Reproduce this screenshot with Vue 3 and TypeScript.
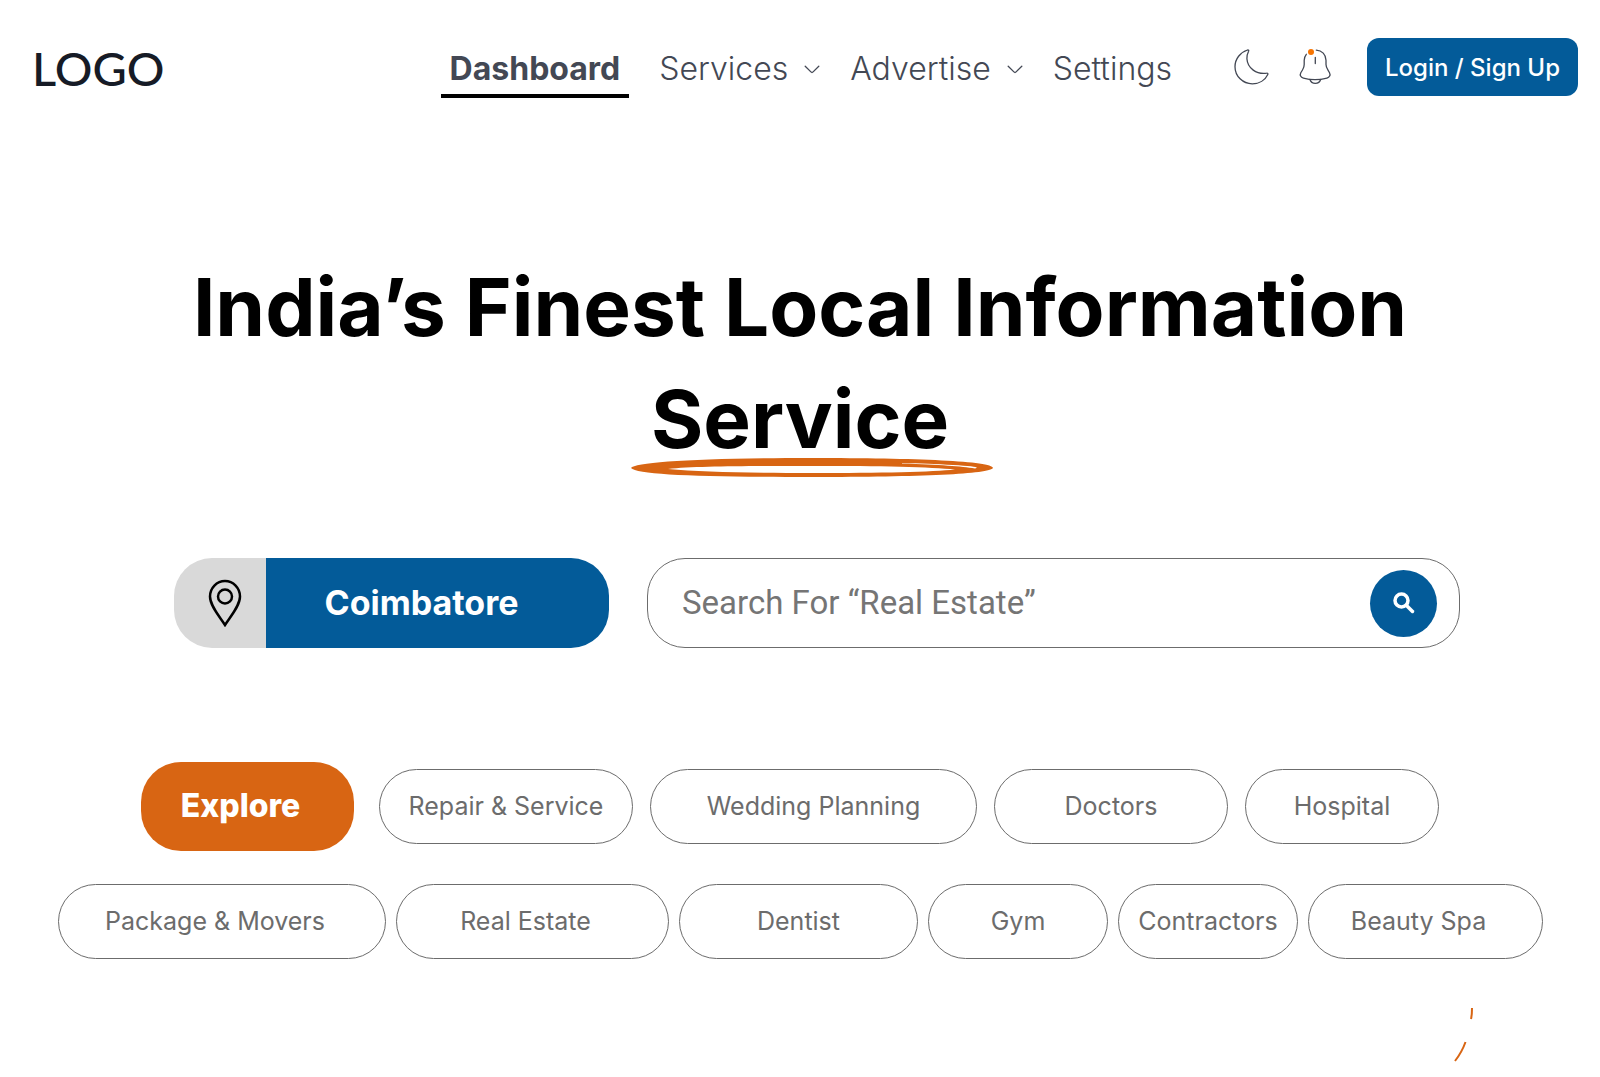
<script setup lang="ts">
import { ref } from 'vue'

interface NavItem {
  label: string
  active?: boolean
  menu?: boolean
}

interface Category {
  label: string
  tone?: string
}

const navItems: NavItem[] = [
  { label: 'Dashboard', active: true },
  { label: 'Services', menu: true },
  { label: 'Advertise', menu: true },
  { label: 'Settings' },
]

const featured: Category[] = [
  { label: 'Explore', tone: 'primary' },
  { label: 'Repair & Service' },
  { label: 'Wedding Planning' },
  { label: 'Doctors' },
  { label: 'Hospital' },
]

const more: Category[] = [
  { label: 'Package & Movers', tone: 'lean' },
  { label: 'Real Estate', tone: 'lean' },
  { label: 'Dentist' },
  { label: 'Gym' },
  { label: 'Contractors' },
  { label: 'Beauty Spa', tone: 'lean' },
]

const query = ref('')
</script>

<template>
  <div class="page">
    <header class="header">
      <a class="logo" href="#">LOGO</a>
      <nav class="nav" aria-label="Main">
        <a
          v-for="item in navItems"
          :key="item.label"
          href="#"
          class="nav-link"
          :class="{ active: item.active }"
        >
          {{ item.label }}
          <svg v-if="item.menu" class="chevron" viewBox="0 0 16 9" aria-hidden="true">
            <path d="M1.2 1.2 6.9 6.9Q8 8 9.1 6.9L14.8 1.2" />
          </svg>
        </a>
      </nav>
      <div class="tools">
        <button class="icon-button" type="button" aria-label="Dark mode">
          <svg viewBox="0 0 36 36" aria-hidden="true">
            <path
              d="M13.6 1C6.4 3.2 1 9.900 1 17.700 1 27.200 8.800 34.800 18.300 34.800 25.200 34.800 31.200 31 33.800 25.400 34.200 24.500 33.600 24 32.700 24.200 22.500 25.600 13.600 19.400 12.900 9.700 12.700 7 13.300 4.800 14.600 2.300 15 1.400 14.500.8 13.600 1Z"
            />
          </svg>
        </button>
        <button class="icon-button" type="button" aria-label="Notifications">
          <svg viewBox="0 0 36 36" aria-hidden="true">
            <path
              d="M18.300 1.100C24 1.300 27.900 5.600 28 11.200V15.600C28 17.800 28.800 19.300 30 21.200L31.500 23.700C32.800 26.200 31.500 28.400 28.900 29.100 21.600 31 12.400 31 5.400 29.100 2.700 28.400 1.500 26.200 2.800 23.700L4.500 21C5.700 19.200 6.200 17.800 6.200 15.600V11.200C6.300 8.700 7 6.900 8.300 5.300"
            />
            <path d="M17.300 8.300V14.500M11.800 30.300C12.600 32.800 14.400 34.400 17.300 34.400S22 32.800 22.800 30.300" />
            <circle class="dot" cx="13" cy="3" r="3" />
          </svg>
        </button>
      </div>
      <button class="login" type="button">Login / Sign Up</button>
    </header>

    <main>
      <h1 class="title">
        India’s Finest Local Information
        <span class="marked">
          Service
          <svg class="scribble" viewBox="0 0 362 20" aria-hidden="true">
            <path
              fill-rule="evenodd"
              d="M0 10C4 4 70 0 181 0 285 0 362 3 362 10 359 16 290 19 181 19 72 19 6 17 0 10ZM37 11C70 14 120 15 181 15 250 15 302 14 324 11.500 300 9 250 8 181 8 120 8 65 8 37 11ZM271 5.500C310 7 330 8 344 10.500 350 9.500 342 8 322 7 305 6 290 5.500 271 5Z"
            />
          </svg>
        </span>
      </h1>

      <form class="finder" role="search" @submit.prevent>
        <button class="location" type="button">
          <span class="pin">
            <svg viewBox="0 0 34 48" aria-hidden="true">
              <path d="M17 46C12 38 2 27 2 17.500A15 15.500 0 0 1 32 17.500C32 27 22 38 17 46Z" />
              <circle cx="17" cy="17.500" r="7" />
            </svg>
          </span>
          <span class="city">Coimbatore</span>
        </button>
        <div class="search">
          <input
            v-model="query"
            type="text"
            aria-label="Search"
            placeholder="Search For “Real Estate”"
          />
          <button class="submit" type="submit" aria-label="Search">
            <svg viewBox="0 0 22 22" aria-hidden="true">
              <circle cx="8.500" cy="8.500" r="6.500" />
              <path d="M13.500 13.500 19.500 19.500" />
            </svg>
          </button>
        </div>
      </form>

      <div class="chips featured">
        <button v-for="c in featured" :key="c.label" type="button" class="chip" :class="c.tone">
          {{ c.label }}
        </button>
      </div>
      <div class="chips more">
        <button v-for="c in more" :key="c.label" type="button" class="chip" :class="c.tone">
          {{ c.label }}
        </button>
      </div>
    </main>

    <svg class="arc" viewBox="0 0 20 56" aria-hidden="true">
      <path d="M18 1Q18 8 17 12M11.500 35Q8 45 1 54" />
    </svg>
  </div>
</template>

<style>
body {
  background: #fff;
}
</style>

<style scoped>
.page {
  font-family: Inter, 'Noto Sans', sans-serif;
  color: #000;
  overflow: hidden;
}

button {
  font-family: inherit;
  border: 0;
  padding: 0;
  cursor: pointer;
}

a {
  color: inherit;
  text-decoration: none;
}

.header {
  display: flex;
  align-items: center;
  padding: 38px 22px 0 32px;
  height: 58px;
}

.logo {
  font-family: Lato, sans-serif;
  font-size: 47px;
  font-weight: 500;
  line-height: 58px;
  color: #161b26;
  margin-right: auto;
  padding-top: 2px;
}

.nav {
  display: flex;
  gap: 30px;
}

.nav-link {
  display: flex;
  align-items: center;
  gap: 16px;
  font-size: 32px;
  line-height: 50px;
  font-weight: 300;
  color: #434854;
  padding-top: 8px;
  border-bottom: 4px solid transparent;
}

.nav-link.active {
  font-weight: 700;
  padding: 8px 9px 0;
  border-bottom-color: #000;
}

.chevron {
  width: 16px;
  height: 9px;
  fill: none;
  stroke: #434854;
  stroke-width: 1.3;
  stroke-linecap: round;
}

.tools {
  display: flex;
  gap: 28px;
  margin: 0 33px 0 62px;
}

.icon-button {
  width: 36px;
  height: 36px;
  background: none;
}

.icon-button svg {
  display: block;
  width: 36px;
  height: 36px;
  fill: none;
  stroke: #434854;
  stroke-width: 1.3;
  stroke-linecap: round;
}

.icon-button .dot {
  fill: #f77400;
  stroke: none;
}

.login {
  width: 211px;
  height: 58px;
  border-radius: 12px;
  background: #035b99;
  color: #fff;
  font-size: 24px;
  font-weight: 500;
}

.title {
  margin: 155px auto 0;
  font-size: 80px;
  line-height: 112px;
  font-weight: 700;
  text-align: center;
}

.marked {
  position: relative;
  display: table;
  margin: 0 auto;
}

.scribble {
  position: absolute;
  left: 50%;
  bottom: -3px;
  width: 362px;
  height: 20px;
  margin-left: -169px;
  fill: #d86513;
}

.finder {
  display: grid;
  grid-template-columns: 435fr 813fr;
  gap: 38px;
  padding: 0 140px 0 174px;
  margin-top: 83px;
}

.location {
  display: flex;
  height: 90px;
  background: none;
}

.pin {
  display: flex;
  align-items: center;
  justify-content: center;
  width: 92px;
  height: 90px;
  padding-left: 10px;
  box-sizing: border-box;
  border-radius: 38px 0 0 38px;
  background: #d9d9d9;
}

.pin svg {
  width: 34px;
  height: 48px;
  fill: none;
  stroke: #000;
  stroke-width: 2.500;
}

.city {
  flex: 1;
  padding-right: 32px;
  border-radius: 0 38px 38px 0;
  background: #035b99;
  color: #fff;
  font-size: 34px;
  line-height: 90px;
  font-weight: 700;
}

.search {
  display: flex;
  align-items: center;
  box-sizing: border-box;
  min-width: 0;
  height: 90px;
  padding: 0 22px 0 34px;
  border: 1px solid #6c6c6c;
  border-radius: 38px;
}

.search input {
  flex: 1;
  min-width: 0;
  height: 60px;
  padding: 0 0 2px;
  box-sizing: border-box;
  border: 0;
  outline: 0;
  background: none;
  color: #6c6c6c;
  font-family: Roboto, sans-serif;
  font-size: 33px;
}

.search input::placeholder {
  color: #757575;
  opacity: 1;
}

.submit {
  display: flex;
  align-items: center;
  justify-content: center;
  width: 67px;
  height: 67px;
  border-radius: 50%;
  background: #035b99;
}

.submit svg {
  width: 22px;
  height: 22px;
  fill: none;
  stroke: #fff;
  stroke-width: 3.500;
  stroke-linecap: round;
}

.chips {
  display: grid;
  align-items: center;
}

.featured {
  grid-template-columns: 221fr 254fr 327fr 234fr 194fr;
  gap: 17px;
  padding: 0 161px 0 141px;
  margin-top: 114px;
}

.more {
  grid-template-columns: 328fr 273fr 239fr 180fr 180fr 235fr;
  gap: 10px;
  padding: 0 57px 0 58px;
  margin-top: 33px;
}

.chip {
  box-sizing: border-box;
  height: 75px;
  padding-bottom: 2px;
  border: 1px solid #6c6c6c;
  border-radius: 38px;
  background: #fff;
  color: #6c6c6c;
  font-size: 25px;
  white-space: nowrap;
}

.chip.lean {
  padding-right: 14px;
}

.chip.primary {
  height: 89px;
  margin-right: 8px;
  padding-right: 14px;
  border: 0;
  border-radius: 40px;
  background: #d86513;
  color: #fff;
  font-size: 32px;
  font-weight: 800;
}

.arc {
  display: block;
  width: 20px;
  height: 56px;
  margin: 48px 126px 0 auto;
  fill: none;
  stroke: #d86513;
  stroke-width: 2;
}
</style>
